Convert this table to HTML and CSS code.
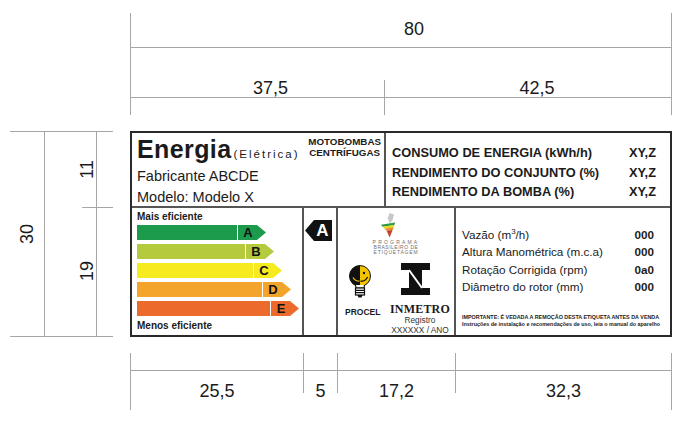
FILE: index.html
```html
<!DOCTYPE html>
<html lang="pt-BR">
<head>
<meta charset="utf-8">
<title>Etiqueta Motobombas</title>
<link rel="stylesheet" href="styles.css">
</head>
<body>
<div class="sheet">
  <div class="blank"></div>

  <div class="dim-top">
    <div class="d-total">80</div>
    <div class="d-split">
      <div class="d-cell d-cell-left"><div class="d-lbl l375">37,5</div></div>
      <div class="d-cell"><div class="d-lbl l425">42,5</div></div>
    </div>
  </div>

  <div class="dim-left">
    <div class="t30"><span class="vtext">30</span></div>
    <div class="t11"><span class="vtext">11</span></div>
    <div class="t19"><span class="vtext">19</span></div>
    <div class="tick"></div>
  </div>

  <div class="label">
    <div class="head">
      <div class="head-left">
        <div class="head-top">
          <div class="brand"><span class="energia">Energia</span><span class="eletrica">(Elétrica)</span></div>
          <div class="kind">MOTOBOMBAS<br>CENTRÍFUGAS</div>
        </div>
        <div class="maker first">Fabricante ABCDE</div>
        <div class="maker">Modelo: Modelo X</div>
      </div>
      <div class="head-right">
        <div class="spec"><span>CONSUMO DE ENERGIA (kWh/h)</span><span>XY,Z</span></div>
        <div class="spec"><span>RENDIMENTO DO CONJUNTO (%)</span><span>XY,Z</span></div>
        <div class="spec"><span>RENDIMENTO DA BOMBA (%)</span><span>XY,Z</span></div>
      </div>
    </div>

    <div class="body">
      <div class="scale">
        <div class="scale-title">Mais eficiente</div>
        <div class="bars">
          <div class="bar cls-a"><div class="bar-fill" style="width:100px"></div><div class="bar-tag">A</div></div>
          <div class="bar cls-b"><div class="bar-fill" style="width:108px"></div><div class="bar-tag">B</div></div>
          <div class="bar cls-c"><div class="bar-fill" style="width:116px"></div><div class="bar-tag">C</div></div>
          <div class="bar cls-d"><div class="bar-fill" style="width:125px"></div><div class="bar-tag">D</div></div>
          <div class="bar cls-e"><div class="bar-fill" style="width:133px"></div><div class="bar-tag">E</div></div>
        </div>
        <div class="scale-title">Menos eficiente</div>
      </div>

      <div class="rating"><div class="rating-tag">A</div></div>

      <div class="logos">
        <svg class="pbe-mark" viewBox="0 0 20 25" aria-hidden="true">
          <path d="M10.5 0 L15 1.5 L13.8 6.5 L10.8 10.8 L8.8 5.5 Z" fill="#c8c8c8"/>
          <path d="M2 11.8 L16.2 9.6 L15.4 12.1 L3.6 13.7 Z" fill="#2a9a40"/>
          <path d="M3.6 13.7 L15.4 12.1 L14.6 14.6 L5.6 15.7 Z" fill="#e6d31f"/>
          <path d="M5.6 15.7 L14.6 14.6 L13.6 17.1 L7.6 17.7 Z" fill="#e5892a"/>
          <path d="M7.6 17.7 L13.6 17.1 L11.6 22 L10.6 24.5 Z" fill="#c4432c"/>
        </svg>
        <div class="pbe-text">
          <span class="pbe-l1">PROGRAMA</span>
          <span class="pbe-l2">BRASILEIRO DE</span>
          <span class="pbe-l3">ETIQUETAGEM</span>
        </div>
        <div class="logo-row">
          <div class="procel">
            <svg class="bulb" viewBox="0 0 24 34" aria-hidden="true">
              <circle cx="12" cy="11" r="10.5" fill="#f4c300" stroke="#111" stroke-width="1"/>
              <path d="M12 0.5 A10.5 10.5 0 0 0 12 21.5 Z" fill="#111"/>
              <circle cx="16" cy="8" r="1.2" fill="#111"/>
              <path d="M12.5 16.2 Q17.2 16.6 19.6 12" stroke="#111" stroke-width="1.3" fill="none"/>
              <path d="M5 12.5 Q7 16.2 11.5 16.2" stroke="#f4c300" stroke-width="1.2" fill="none"/>
              <path d="M7.5 20 L8 23 L16 23 L16.5 20" fill="#fff" stroke="#111" stroke-width="1.2"/>
              <rect x="7.5" y="23" width="9" height="7" fill="#fff" stroke="#111" stroke-width="1.2"/>
              <path d="M7.5 25.3 H16.5 M7.5 27.6 H16.5" stroke="#111" stroke-width="1.2"/>
              <path d="M9.5 30 L10.5 32.5 H13.5 L14.5 30 Z" fill="#111"/>
            </svg>
            <div class="procel-name">PROCEL</div>
          </div>
          <div class="inmetro">
            <svg class="inmetro-mark" viewBox="0 0 29 32" aria-hidden="true">
              <rect x="0" y="0" width="29" height="7" fill="#111"/>
              <rect x="8" y="7" width="13" height="18" fill="#111"/>
              <rect x="0" y="25" width="29" height="7" fill="#111"/>
              <path d="M8 7 L21 25" stroke="#fff" stroke-width="2"/>
            </svg>
            <div class="inmetro-name">INMETRO</div>
            <div class="reg">Registro</div>
            <div class="reg">XXXXXX / ANO</div>
          </div>
        </div>
      </div>

      <div class="data">
        <div class="row"><span>Vazão (m<sup>3</sup>/h)</span><b>000</b></div>
        <div class="row"><span>Altura Manométrica (m.c.a)</span><b>000</b></div>
        <div class="row"><span>Rotação Corrigida (rpm)</span><b>0a0</b></div>
        <div class="row"><span>Diâmetro do rotor (mm)</span><b>000</b></div>
        <div class="notes">
          <div>IMPORTANTE: É VEDADA A REMOÇÃO DESTA ETIQUETA ANTES DA VENDA</div>
          <div>Instruções de instalação e recomendações de uso, leia o manual do aparelho</div>
        </div>
      </div>
    </div>
  </div>

  <div class="blank"></div>

  <div class="dim-bottom">
    <div class="b-cell w1"><div class="b-sp"></div><div class="b-txt">25,5</div></div>
    <div class="b-cell w2"><div class="b-sp"></div><div class="b-txt">5</div></div>
    <div class="b-cell w3"><div class="b-sp"></div><div class="b-txt">17,2</div></div>
    <div class="b-cell w4"><div class="b-sp"></div><div class="b-txt">32,3</div></div>
  </div>
</div>
</body>
</html>
```

FILE: styles.css
```css
html, body {
  margin: 0;
  padding: 0;
  background: #ffffff;
}

body {
  font-family: "Liberation Sans", Arial, sans-serif;
  color: #1b1b1b;
}

.sheet {
  display: grid;
  grid-template-columns: 130px 542px;
  grid-template-rows: 131px 206px 90px;
  width: 690px;
  height: 427px;
}

/* ---------- dimension lines ---------- */
.dim-top {
  margin-top: 13px;
  height: 102px;
  box-sizing: border-box;
  border-left: 1px solid #a6a6a6;
  border-right: 1px solid #a6a6a6;
}

.d-total {
  height: 35px;
  box-sizing: border-box;
  border-bottom: 1px solid #a6a6a6;
  padding: 7px 0 0 26px;
  text-align: center;
  font-size: 18px;
  line-height: 18px;
}

.d-split {
  display: flex;
  margin-top: 32px;
  height: 35px;
}

.d-cell {
  flex: 1;
}

.d-cell-left {
  flex: 0 0 254px;
  box-sizing: border-box;
  border-right: 1px solid #a6a6a6;
}

.d-lbl {
  height: 18px;
  box-sizing: border-box;
  border-bottom: 1px solid #a6a6a6;
  font-size: 18px;
  line-height: 17px;
  text-align: center;
}

.l375 { padding-left: 26px; }
.l425 { padding-left: 18px; }

.dim-left {
  margin-left: 10px;
  width: 103px;
  box-sizing: border-box;
  border-top: 1px solid #a6a6a6;
  border-bottom: 1px solid #a6a6a6;
  display: grid;
  grid-template-columns: 35px 37px 15px 16px;
  grid-template-rows: 75px 1fr;
}

.vtext {
  writing-mode: vertical-rl;
  transform: rotate(180deg);
  font-size: 18px;
  line-height: 18px;
}

.t30 {
  grid-column: 1;
  grid-row: 1 / 3;
  border-right: 1px solid #a6a6a6;
  display: flex;
  align-items: center;
  justify-content: center;
}

.t11, .t19 {
  grid-column: 2 / 4;
  border-right: 1px solid #a6a6a6;
  display: flex;
  align-items: center;
  justify-content: flex-end;
}

.t11 { grid-row: 1; }
.t19 { grid-row: 2; }

.tick {
  grid-column: 3 / 5;
  grid-row: 2;
  border-top: 1px solid #a6a6a6;
}

.dim-bottom {
  margin-top: 16px;
  height: 57px;
  box-sizing: border-box;
  border-left: 1px solid #a6a6a6;
  border-right: 1px solid #a6a6a6;
  display: flex;
  align-items: flex-start;
}

.b-cell {
  height: 40px;
  box-sizing: border-box;
  border-right: 1px solid #a6a6a6;
}

.w1 { width: 173px; }
.w2 { width: 34px; }
.w3 { width: 118px; }
.w4 { flex: 1; border-right: none; }

.b-sp {
  height: 18px;
  box-sizing: border-box;
  border-bottom: 1px solid #a6a6a6;
}

.b-txt {
  margin-top: 11px;
  font-size: 18px;
  line-height: 18px;
  text-align: center;
}

/* ---------- label ---------- */
.label {
  box-sizing: border-box;
  border: 2px solid #2a2a2a;
  display: flex;
  flex-direction: column;
  overflow: hidden;
}

.head {
  height: 75px;
  box-sizing: border-box;
  border-bottom: 2px solid #555;
  display: flex;
}

.head-left {
  width: 254px;
  box-sizing: border-box;
  border-right: 2px solid #555;
  padding: 2px 3px 0 5px;
}

.head-top {
  display: flex;
  justify-content: space-between;
  align-items: flex-start;
}

.brand {
  height: 28px;
  line-height: 28px;
  white-space: nowrap;
}

.energia {
  font-size: 25px;
  font-weight: bold;
  letter-spacing: 0.4px;
}

.eletrica {
  font-size: 11.5px;
  line-height: 11px;
  letter-spacing: 2px;
  margin-left: 2px;
}

.kind {
  margin-top: 1px;
  font-size: 9.8px;
  font-weight: bold;
  line-height: 11px;
  text-align: center;
}

.maker {
  font-size: 14.5px;
  line-height: 21px;
  white-space: nowrap;
}

.maker.first {
  margin-top: 3px;
}

.head-right {
  flex: 1;
  padding: 10px 14px 0 6px;
}

.spec {
  display: flex;
  justify-content: space-between;
  font-size: 12.8px;
  font-weight: bold;
  line-height: 19.5px;
  white-space: nowrap;
}

.body {
  flex: 1;
  display: flex;
}

.scale {
  width: 172px;
  box-sizing: border-box;
  border-right: 2px solid #555;
  padding: 3px 0 0 5px;
}

.scale-title {
  font-size: 10px;
  font-weight: bold;
  line-height: 12px;
}

.bars {
  display: flex;
  flex-direction: column;
  gap: 4px;
  margin: 2px 0 4px;
}

.bar {
  display: flex;
  height: 15px;
}

.bar-fill {
  height: 100%;
}

.bar-tag {
  width: 28px;
  margin-left: 1px;
  box-sizing: border-box;
  padding-right: 8px;
  clip-path: polygon(0 0, 19px 0, 100% 50%, 19px 100%, 0 100%);
  font-size: 13px;
  font-weight: bold;
  line-height: 15px;
  text-align: center;
  color: #111;
}

.cls-a .bar-fill, .cls-a .bar-tag { background: #1c9b4d; }
.cls-b .bar-fill, .cls-b .bar-tag { background: #b5cb3d; }
.cls-c .bar-fill, .cls-c .bar-tag { background: #f5eb1f; }
.cls-d .bar-fill, .cls-d .bar-tag { background: #f4a42b; }
.cls-e .bar-fill, .cls-e .bar-tag { background: #eb6a2c; }

.rating {
  width: 34px;
  box-sizing: border-box;
  border-right: 2px solid #555;
  padding: 12px 0 0 1px;
}

.rating-tag {
  width: 27px;
  height: 21px;
  box-sizing: border-box;
  padding-left: 8px;
  background: #111;
  color: #fff;
  clip-path: polygon(9px 0, 100% 0, 100% 100%, 9px 100%, 0 50%);
  font-size: 17px;
  font-weight: bold;
  line-height: 21px;
  text-align: center;
}

.logos {
  width: 118px;
  box-sizing: border-box;
  border-right: 2px solid #555;
  display: flex;
  flex-direction: column;
  align-items: center;
  padding-top: 5px;
}

.pbe-mark {
  display: block;
  width: 20px;
  height: 25px;
  margin-right: 14px;
}

.pbe-text {
  margin-top: 2px;
  display: flex;
  flex-direction: column;
  align-items: center;
  font-size: 5px;
  line-height: 5px;
  color: #6f6f6f;
}

.pbe-l1 { letter-spacing: 2.2px; }
.pbe-l2 { letter-spacing: 0.5px; }
.pbe-l3 { letter-spacing: 0.8px; }

.logo-row {
  display: flex;
  justify-content: space-between;
  align-items: flex-start;
  width: 100%;
  box-sizing: border-box;
  padding: 0 4px 0 7px;
  margin-top: 8px;
}

.procel {
  display: flex;
  flex-direction: column;
  align-items: center;
}

.bulb {
  display: block;
  width: 24px;
  height: 34px;
  margin-top: 2px;
  margin-right: 5px;
}

.procel-name {
  margin-top: 8px;
  font-size: 8.5px;
  font-weight: bold;
  line-height: 10px;
}

.inmetro {
  display: flex;
  flex-direction: column;
  align-items: center;
}

.inmetro-mark {
  display: block;
  width: 29px;
  height: 32px;
  margin-right: 8px;
}

.inmetro-name {
  margin-top: 8px;
  font-family: "Liberation Serif", "Times New Roman", serif;
  font-size: 12px;
  font-weight: bold;
  line-height: 12px;
  letter-spacing: 0.2px;
}

.reg {
  font-size: 8.3px;
  line-height: 10px;
  color: #333;
  white-space: nowrap;
}

.data {
  flex: 1;
  display: flex;
  flex-direction: column;
  padding: 18px 16px 7px 6px;
}

.row {
  display: flex;
  justify-content: space-between;
  font-size: 11.7px;
  line-height: 17.3px;
}

.row sup {
  font-size: 8px;
  line-height: 0;
  vertical-align: 5px;
}

.notes {
  margin-top: auto;
  margin-right: -14px;
  font-size: 5.4px;
  line-height: 7px;
  font-weight: bold;
  white-space: nowrap;
}
```
